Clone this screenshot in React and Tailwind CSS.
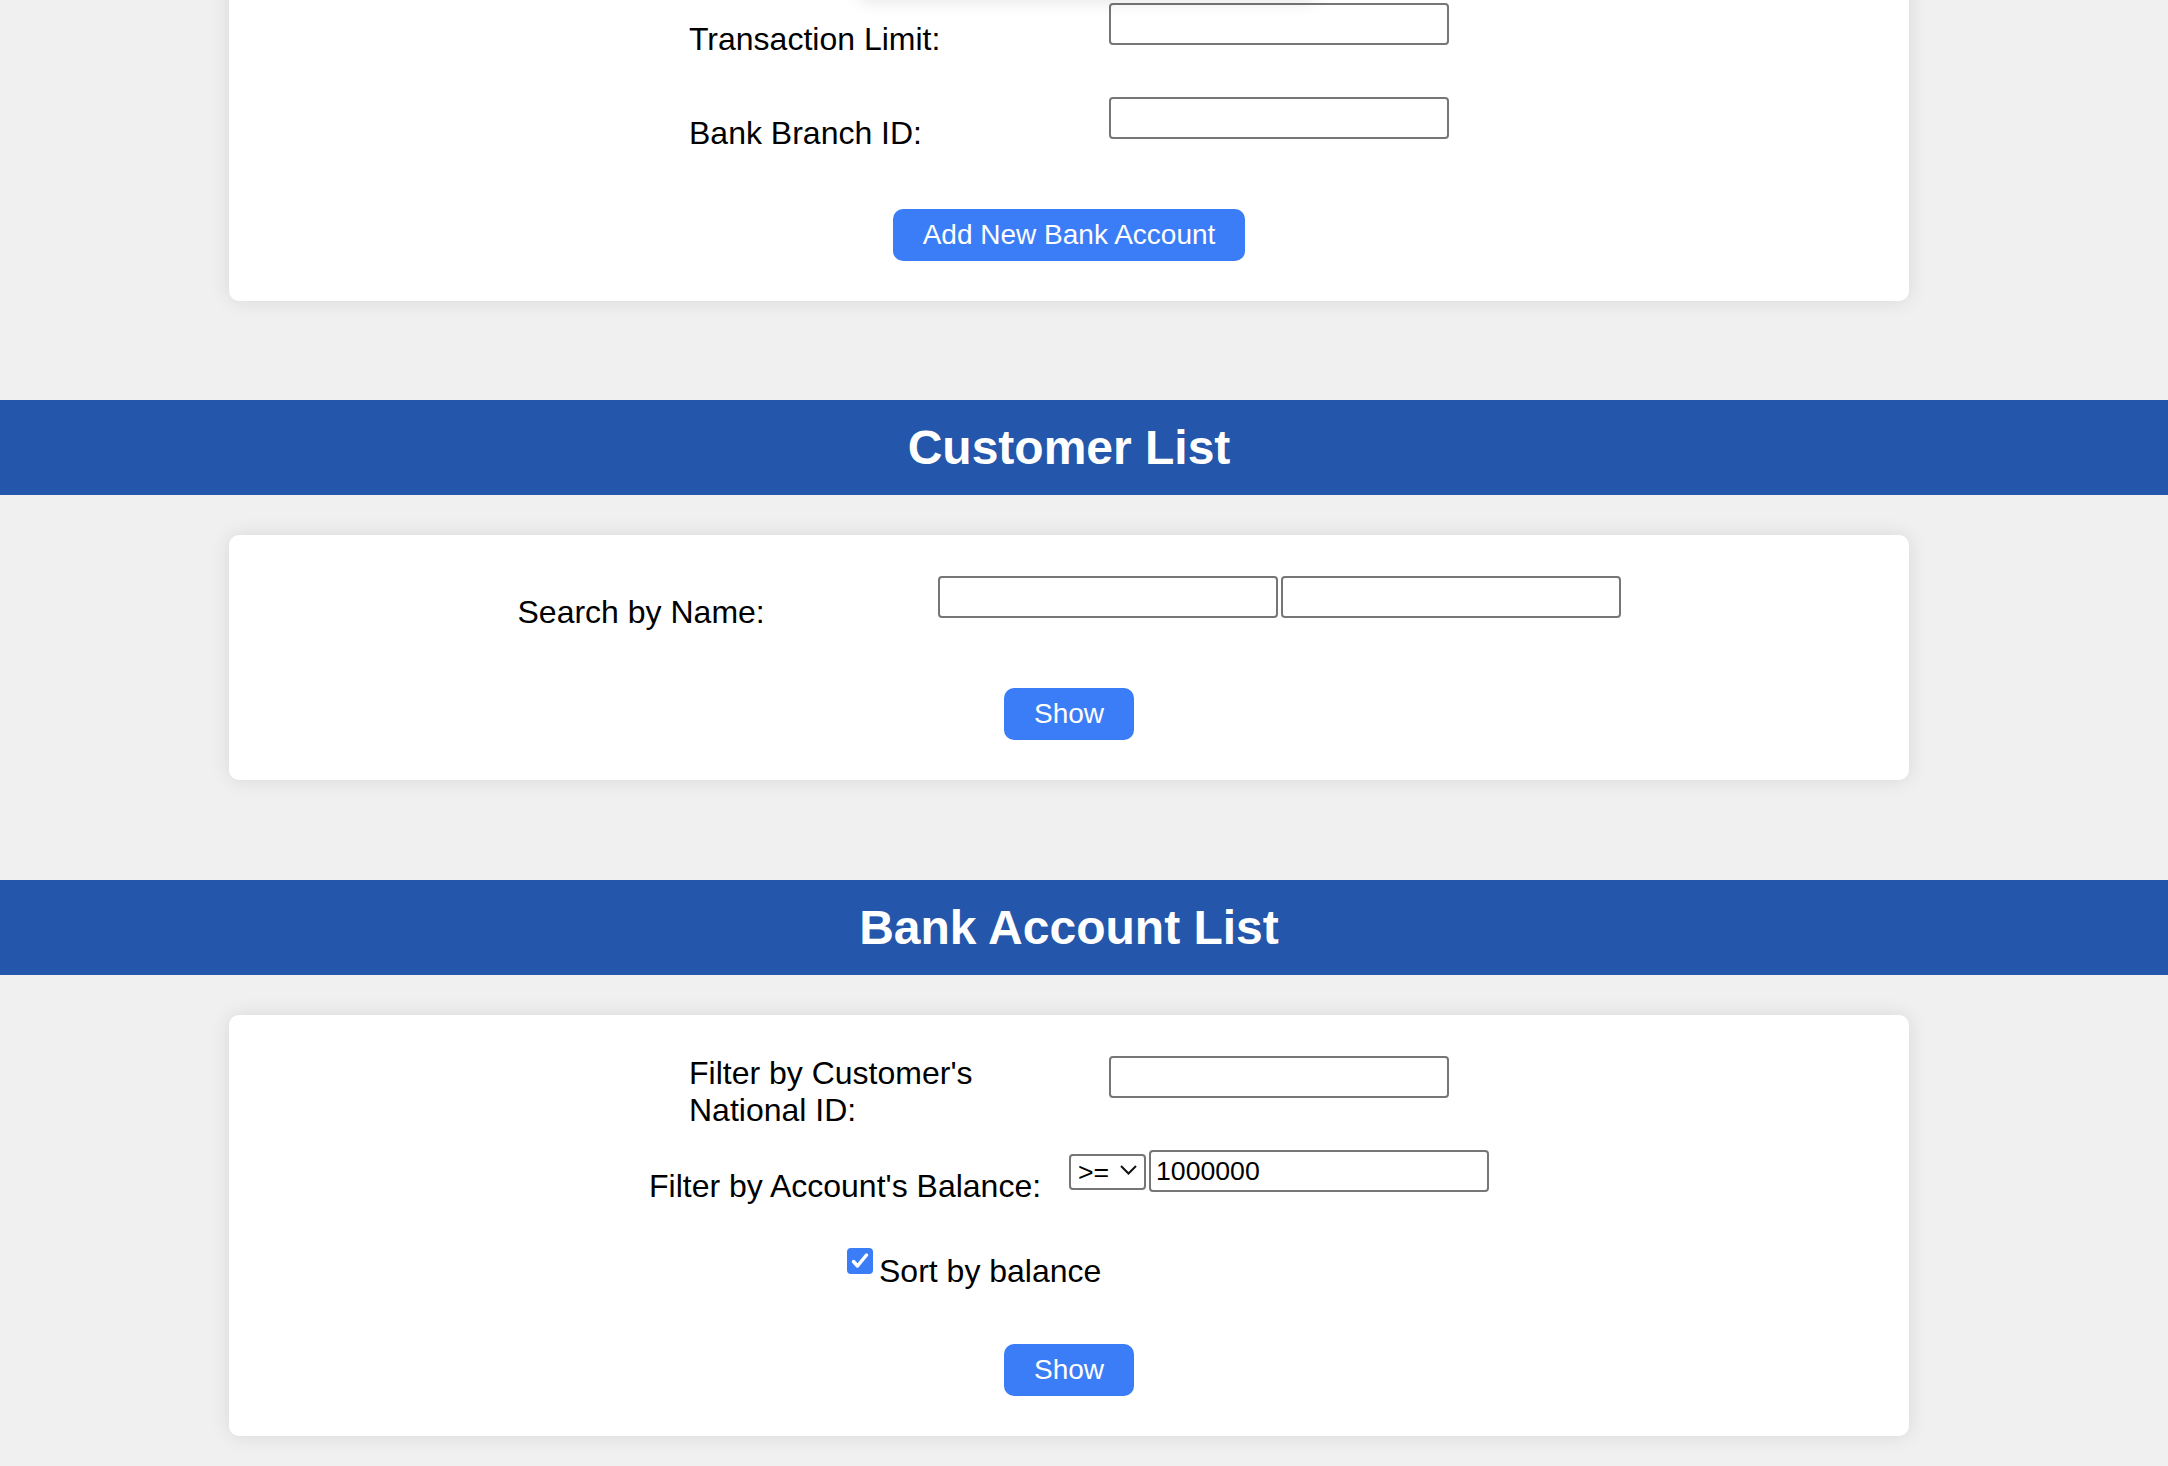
import { useState } from 'react';

function FormRow({ label, children }) {
  return (
    <div className="flex justify-center items-start h-[74px] mb-[20px]">
      <label className="w-[400px] mr-[20px] h-[74px] flex items-center">{label}</label>
      <div className="flex items-center gap-[3px] mt-[1px]">{children}</div>
    </div>
  );
}

function TextInput({ value, onChange }) {
  return (
    <input
      type="text"
      value={value}
      onChange={onChange}
      className="w-[340px] h-[42px] border-2 border-[#767676] rounded-[4px] px-[5px] text-[26.67px] bg-white outline-none"
    />
  );
}

function SectionHeader({ title }) {
  return (
    <div className="bg-[#2456ab] py-[20px]">
      <h2 className="w-[2138px] text-center text-white font-bold text-[48px] leading-[normal]">{title}</h2>
    </div>
  );
}

function BlueButton({ children }) {
  return (
    <div className="flex justify-center pt-[19px]">
      <button className="px-[30px] py-[10px] bg-[#3b7df6] text-white text-[28px] leading-[normal] rounded-[10px]">
        {children}
      </button>
    </div>
  );
}

export default function App() {
  const [limit, setLimit] = useState('');
  const [branch, setBranch] = useState('');
  const [first, setFirst] = useState('');
  const [last, setLast] = useState('');
  const [nationalId, setNationalId] = useState('');
  const [op, setOp] = useState('>=');
  const [balance, setBalance] = useState('1000000');
  const [sorted, setSorted] = useState(true);

  return (
    <div className="relative min-h-screen overflow-hidden bg-[#f0f0f0] pb-[60px] font-['Liberation_Sans',Arial,sans-serif] text-black leading-[normal]">
      {/* shadow of something above the fold */}
      <div className="absolute left-[860px] top-[-30px] w-[456px] h-[30px] bg-white shadow-[0_0_18px_rgba(0,0,0,0.12)] z-10" />

      {/* Add bank account form (top cut off) */}
      <div className="w-[2138px] px-[229px] -mt-[38px]">
        <div className="bg-white rounded-[10px] shadow-[0_0_20px_rgba(0,0,0,0.1)] pt-[40px] pb-[40px] text-[32px]">
          <FormRow label="Transaction Limit:">
            <TextInput value={limit} onChange={(e) => setLimit(e.target.value)} />
          </FormRow>
          <FormRow label="Bank Branch ID:">
            <TextInput value={branch} onChange={(e) => setBranch(e.target.value)} />
          </FormRow>
          <BlueButton>Add New Bank Account</BlueButton>
        </div>
      </div>

      <div className="mt-[99px]">
        <SectionHeader title="Customer List" />
      </div>

      <div className="w-[2138px] px-[229px] mt-[40px]">
        <div className="bg-white rounded-[10px] shadow-[0_0_20px_rgba(0,0,0,0.1)] pt-[40px] pb-[40px] text-[32px]">
          <FormRow label="Search by Name:">
            <TextInput value={first} onChange={(e) => setFirst(e.target.value)} />
            <TextInput value={last} onChange={(e) => setLast(e.target.value)} />
          </FormRow>
          <BlueButton>Show</BlueButton>
        </div>
      </div>

      <div className="mt-[100px]">
        <SectionHeader title="Bank Account List" />
      </div>

      <div className="w-[2138px] px-[229px] mt-[40px]">
        <div className="bg-white rounded-[10px] shadow-[0_0_20px_rgba(0,0,0,0.1)] pt-[40px] pb-[40px] text-[32px]">
          <FormRow label="Filter by Customer's National ID:">
            <TextInput value={nationalId} onChange={(e) => setNationalId(e.target.value)} />
          </FormRow>
          <FormRow label="Filter by Account's Balance:">
            <div className="relative">
              <select
                value={op}
                onChange={(e) => setOp(e.target.value)}
                className="appearance-none w-[77px] h-[36px] border-2 border-[#767676] rounded-[4px] pl-[7px] text-[26.67px] leading-[normal] bg-white outline-none"
              >
                <option value=">=">&gt;=</option>
                <option value="<=">&lt;=</option>
              </select>
              <svg className="absolute left-[51px] top-[13px] pointer-events-none" width="17" height="10" viewBox="0 0 17 10">
                <polyline points="1,1 8.5,8.5 16,1" fill="none" stroke="#111" strokeWidth="2" />
              </svg>
            </div>
            <TextInput value={balance} onChange={(e) => setBalance(e.target.value)} />
          </FormRow>
          <div className="flex justify-center items-start h-[62px] mb-[20px]">
            <button
              type="button"
              onClick={() => setSorted(!sorted)}
              className={`mt-[5px] ml-[8px] mr-[6px] w-[26px] h-[26px] rounded-[4px] flex items-center justify-center ${sorted ? 'bg-[#3b7df6]' : 'bg-white border-2 border-[#767676]'}`}
            >
              {sorted && (
                <svg width="26" height="26" viewBox="0 0 26 26">
                  <path d="M6.5 13.5 L10.5 18 L19.5 7" fill="none" stroke="#fff" strokeWidth="3.5" strokeLinecap="round" strokeLinejoin="round" />
                </svg>
              )}
            </button>
            <label className="w-[400px] mr-[20px] pt-[10px]">Sort by balance</label>
          </div>
          <BlueButton>Show</BlueButton>
        </div>
      </div>
    </div>
  );
}
